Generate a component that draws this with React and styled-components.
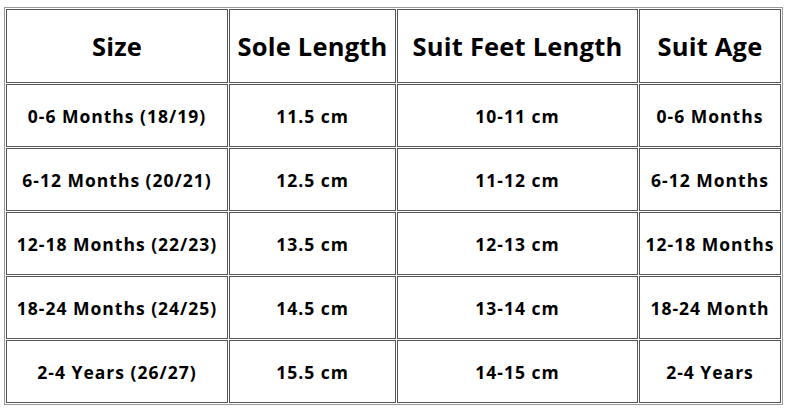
import React from 'react'
import styled, { createGlobalStyle } from 'styled-components'

const GlobalStyle = createGlobalStyle`
  html, body {
    margin: 0;
    padding: 0;
    background: #ffffff;
  }
  body {
    font-family: "Comic Sans MS", "Open Sans", sans-serif;
    color: #000;
  }
`

const Page = styled.div`
  width: 792px;
  height: 413px;
  padding: 7px 0 0 4px;
  box-sizing: border-box;
`

const Table = styled.table`
  border-collapse: separate;
  border-spacing: 1px;
  border: 1px solid #9a9a9a;
  table-layout: fixed;
  width: 779px;
`

const HeadCell = styled.th`
  height: 72px;
  padding: 0;
  border: 1px solid #555;
  font-size: 25.5px;
  font-weight: 700;
  letter-spacing: 0.2px;
  text-align: center;
  vertical-align: middle;
  white-space: nowrap;
`

const Cell = styled.td`
  height: 61px;
  padding: 0;
  border: 1px solid #555;
  font-size: 17.5px;
  font-weight: 700;
  letter-spacing: 1px;
  text-align: center;
  vertical-align: middle;
  white-space: nowrap;
`

const columns = [
  { title: 'Size', width: 222 },
  { title: 'Sole Length', width: 167 },
  { title: 'Suit Feet Length', width: 241 },
  { title: 'Suit Age', width: 142 },
]

const rows = [
  ['0-6 Months (18/19)', '11.5 cm', '10-11 cm', '0-6 Months'],
  ['6-12 Months (20/21)', '12.5 cm', '11-12 cm', '6-12 Months'],
  ['12-18 Months (22/23)', '13.5 cm', '12-13 cm', '12-18 Months'],
  ['18-24 Months (24/25)', '14.5 cm', '13-14 cm', '18-24 Month'],
  ['2-4 Years (26/27)', '15.5 cm', '14-15 cm', '2-4 Years'],
]

export default function App() {
  return (
    <Page>
      <GlobalStyle />
      <Table>
        <colgroup>
          {columns.map(c => (
            <col key={c.title} style={{ width: c.width }} />
          ))}
        </colgroup>
        <thead>
          <tr>
            {columns.map(c => (
              <HeadCell key={c.title}>{c.title}</HeadCell>
            ))}
          </tr>
        </thead>
        <tbody>
          {rows.map(r => (
            <tr key={r[0]}>
              {r.map((v, i) => (
                <Cell key={i}>{v}</Cell>
              ))}
            </tr>
          ))}
        </tbody>
      </Table>
    </Page>
  )
}
